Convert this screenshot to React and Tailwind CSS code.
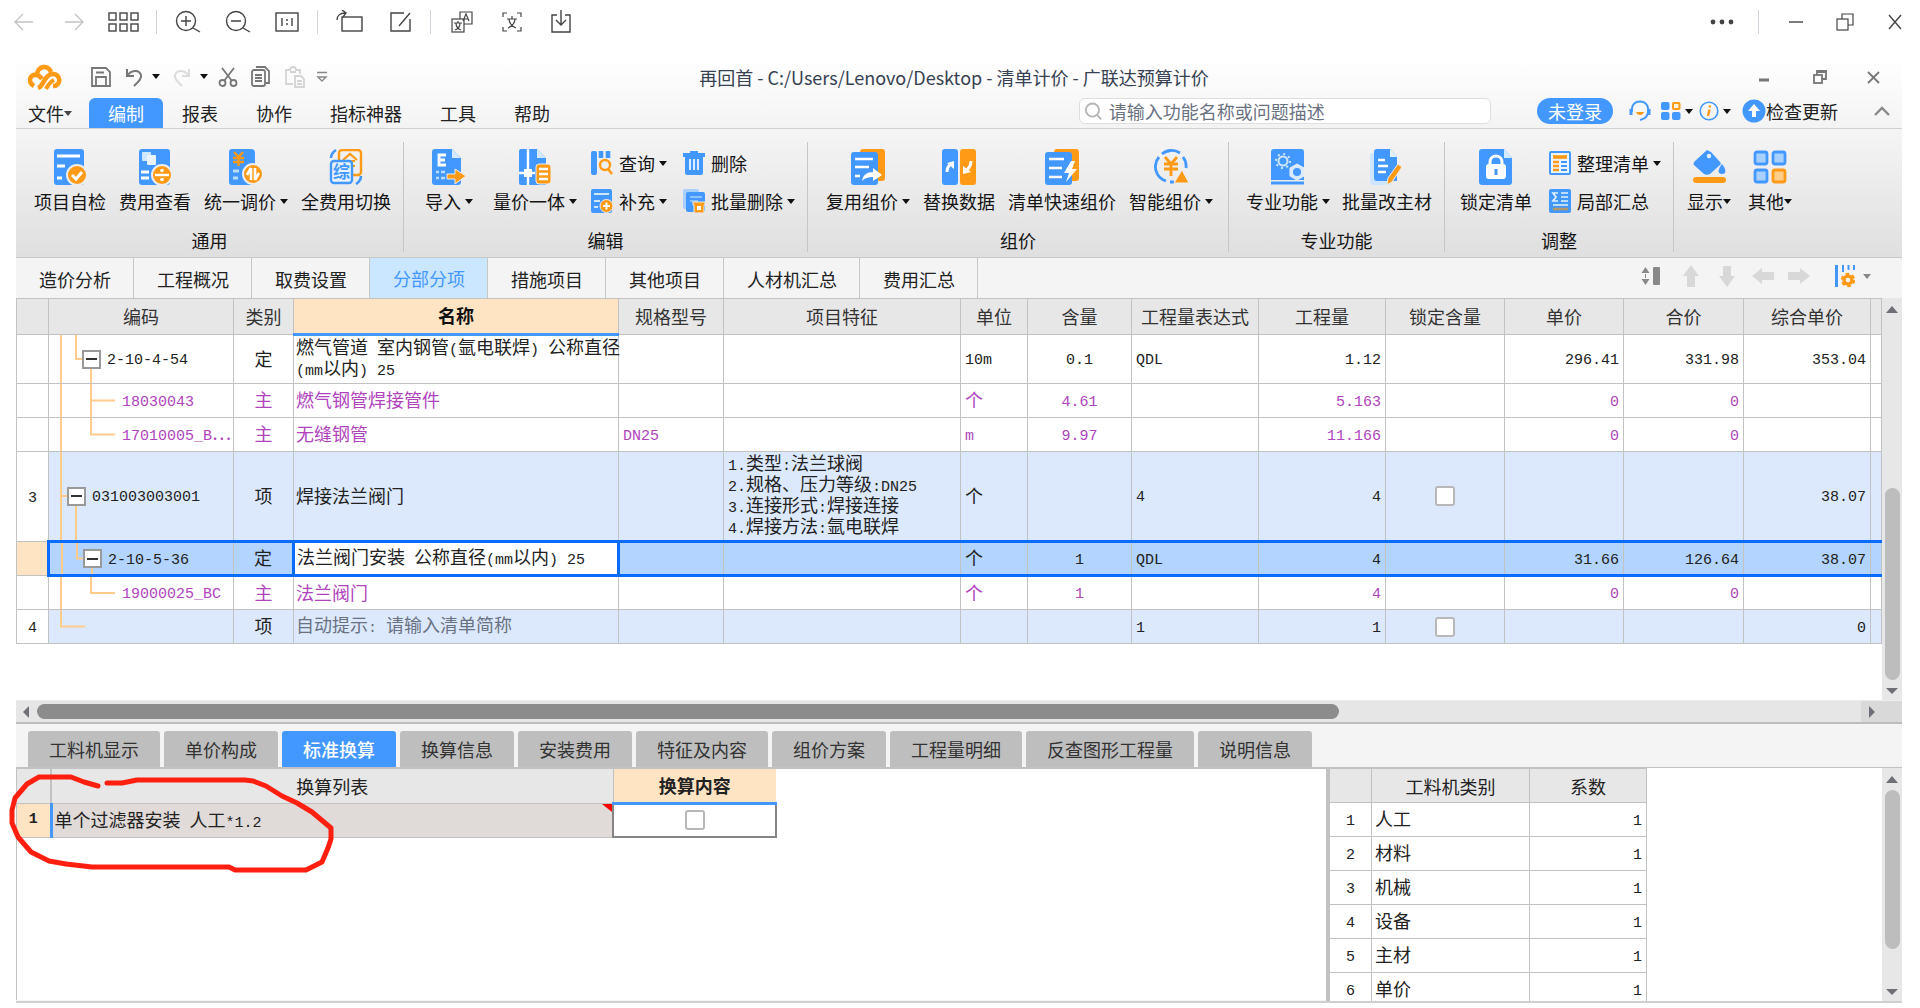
import React, { useState } from 'react';

const BLUE = '#4398ff';
const ORANGE = '#ff9a16';

const Caret = ({ color = '#111' }) => (
  <svg width="8" height="5" viewBox="0 0 8 5" className="shrink-0">
    <path d="M0 0h8L4 5z" fill={color} />
  </svg>
);

/* ---------- viewer toolbar icons ---------- */

const Line = ({ w = 24, h = 24, children, color = '#444', sw = 1.4 }) => (
  <svg width={w} height={h} viewBox={`0 0 ${w} ${h}`} fill="none" stroke={color} strokeWidth={sw}>
    {children}
  </svg>
);

const BackIcon = () => <Line w={20} color="#c4c4c4"><path d="M19 12H1M9 4l-8 8 8 8" /></Line>;
const ForwardIcon = () => <Line w={20} color="#c4c4c4"><path d="M1 12h18M11 4l8 8-8 8" /></Line>;
const ThumbsIcon = () => (
  <Line w={32}>
    {[1, 12, 23].map(x => (
      <g key={x}>
        <rect x={x} y="3" width="7" height="7" />
        <rect x={x} y="14" width="7" height="7" />
      </g>
    ))}
  </Line>
);
const ZoomInIcon = () => (
  <Line w={26}><circle cx="11" cy="11" r="9.5" /><path d="M18 18l7 4M6 11h10M11 6v10" /></Line>
);
const ZoomOutIcon = () => (
  <Line w={26}><circle cx="11" cy="11" r="9.5" /><path d="M18 18l7 4M6 11h10" /></Line>
);
const ActualSizeIcon = () => (
  <Line><rect x="1" y="3" width="22" height="18" /><path d="M7 8v8M17 8v8M12 9v2M12 13v2" /></Line>
);
const RotateIcon = () => (
  <Line w={28}><rect x="6" y="7" width="20" height="14" /><path d="M1 10C1 6 4 3 9 3M6 0l4 3-3 4" /></Line>
);
const EditIcon = () => <Line w={22}><path d="M14 3H1v18h19V9M20 3L9 16" /></Line>;
const TranslateIcon = () => (
  <Line w={22} sw={1.2}>
    <path d="M9 9V2h12v12h-8" />
    <rect x="1" y="9" width="12" height="13" />
    <path d="M12 11l3-7 3 7M13 9h4M3 13h8M7 11v2M4 20c3-1 5-4 5-7M5 13c0 3 2 6 5 7" />
  </Line>
);
const ExtractIcon = () => (
  <Line w={20} sw={1.2}>
    <path d="M1 7V3h4M15 3h4v4M1 17v4h4M15 21h4v-4M5 9h10M10 6v3M6 18c4-2 7-5 7-9M7 9c0 4 3 7 7 9" />
  </Line>
);
const DownloadIcon = () => <Line w={20}><path d="M6 5H1v17h18V5h-5M10 0v15M5 10l5 5 5-5" /></Line>;

const Sep = () => <span className="w-px h-6 bg-gray-300" />;

const ViewerBar = () => (
  <header className="flex items-center h-11 pl-3.5 pr-[18px] shrink-0">
    <div className="flex items-center gap-[26px]">
      <button className="mr-1" aria-label="上一张"><BackIcon /></button>
      <button aria-label="下一张"><ForwardIcon /></button>
      <button className="-ml-0.5 -mr-2.5" aria-label="缩略图"><ThumbsIcon /></button>
      <Sep />
      <div className="flex items-center gap-6 -mx-2">
        <button aria-label="放大"><ZoomInIcon /></button>
        <button aria-label="缩小"><ZoomOutIcon /></button>
        <button aria-label="实际大小"><ActualSizeIcon /></button>
      </div>
      <Sep />
      <div className="flex items-center gap-[26px] -mx-2">
        <button aria-label="旋转"><RotateIcon /></button>
        <button aria-label="编辑"><EditIcon /></button>
      </div>
      <Sep />
      <div className="flex items-center gap-[29px] -ml-1.5">
        <button aria-label="翻译"><TranslateIcon /></button>
        <button aria-label="提取文字"><ExtractIcon /></button>
        <button aria-label="下载"><DownloadIcon /></button>
      </div>
    </div>
    <div className="flex items-center ml-auto">
      <button aria-label="更多">
        <svg width="24" height="6" viewBox="0 0 24 6" fill="#444">
          <circle cx="3" cy="3" r="2.4" /><circle cx="12" cy="3" r="2.4" /><circle cx="21" cy="3" r="2.4" />
        </svg>
      </button>
      <span className="w-px h-6 bg-gray-300 ml-6 mr-[30px]" />
      <button className="mr-[33px]" aria-label="最小化"><Line w={14} h={18}><path d="M0 9h14" /></Line></button>
      <button className="mr-[34px]" aria-label="还原">
        <Line w={18} h={18} sw={1.2}><rect x="1" y="6" width="11" height="11" /><path d="M6 6V1h11v11h-5" /></Line>
      </button>
      <button aria-label="关闭"><Line w={14} h={18}><path d="M1 2l12 14M13 2L1 16" /></Line></button>
    </div>
  </header>
);

/* ---------- application title bar ---------- */

const Logo = () => (
  <svg width="34" height="26" viewBox="0 0 34 26" fill="none" stroke={ORANGE} strokeWidth="4.6">
    <path d="M6 22C-1 18 2 10 8 11c3 0 4 1 6 4" />
    <path d="M9 11C9 2 20 0 23 8" />
    <path d="M10 24C16 22 16 11 24 10c9-1 10 12 1 12" />
    <path d="M18 25c2-4 4-7 8-9" strokeWidth="4" />
  </svg>
);

const TitleBar = () => (
  <div className="flex items-center h-[37px] pl-3 pr-[22px]">
    <div className="flex flex-1 items-center">
      <Logo />
      <button className="ml-7 mr-3" aria-label="保存">
        <Line w={22} h={22} color="#777" sw={1.8}><path d="M2 2h14l4 4v14H2zM6 20v-9h10v9M6 6.500h8" /></Line>
      </button>
      <button className="flex items-center gap-2 mr-3" aria-label="撤销">
        <Line w={20} h={22} color="#777" sw={2}><path d="M3 3v7h7M3 10c4-6 12-7 14-1 1 4-3 7-7 11" /></Line>
        <Caret />
      </button>
      <button className="flex items-center gap-2 mr-2.5" aria-label="恢复">
        <Line w={20} h={22} color="#dcdcdc" sw={2}><path d="M17 3v7h-7M17 10C13 4 5 3 3 9c-1 4 3 7 7 11" /></Line>
        <Caret />
      </button>
      <button className="mr-3" aria-label="剪切">
        <Line w={20} h={22} color="#777" sw={1.8}>
          <path d="M4 2l10 13M16 2L6 15" /><circle cx="4.500" cy="17" r="3" /><circle cx="15.500" cy="17" r="3" />
        </Line>
      </button>
      <button className="mr-3.5" aria-label="复制">
        <Line w={20} h={22} color="#777" sw={1.8}>
          <rect x="2" y="4" width="13" height="16" rx="2" /><path d="M6 1h9l4 4v12h-3M5 9h7M5 12h7M5 15h7" />
        </Line>
      </button>
      <button className="mr-2.5" aria-label="粘贴">
        <Line w={22} h={22} color="#d4d4d4" sw={1.8}>
          <path d="M9 18H2V4h4c0-4 6-4 6 0h4v4M6 6h6" /><path d="M11 10h6l3 3v8h-9zM13 15h5M13 18h5" />
        </Line>
      </button>
      <button aria-label="自定义快速访问">
        <Line w={12} h={12} color="#888"><path d="M1 1.500h10M2 6l4 4 4-4z" /></Line>
      </button>
    </div>
    <h1 className="text-lg leading-6 text-gray-700">再回首 - C:/Users/Lenovo/Desktop - 清单计价 - 广联达预算计价</h1>
    <div className="flex flex-1 items-center justify-end gap-11">
      <button aria-label="最小化窗口"><Line w={10} h={14} color="#777" sw={3}><path d="M0 10h10" /></Line></button>
      <button aria-label="还原窗口">
        <Line w={14} h={14} color="#777" sw={1.8}><rect x="1" y="5" width="8" height="8" /><path d="M4 5V1h9v8H9M4 2h9" /></Line>
      </button>
      <button className="-ml-1" aria-label="关闭窗口"><Line w={13} h={14} color="#777" sw={1.8}><path d="M1 2l11 11M12 2L1 13" /></Line></button>
    </div>
  </div>
);

const MENUS = ['编制', '报表', '协作', '指标神器', '工具', '帮助'];

const MenuRow = () => {
  const [menu, setMenu] = useState('编制');

  return (
    <nav className="flex items-end h-[34px] text-lg leading-[30px] border-b border-[#d0d0d0] pl-3 pr-3">
      <button className="flex items-center mr-[17px]">文件<Caret color="#444" /></button>
      {MENUS.map(item => (
        <button
          key={item}
          onClick={() => setMenu(item)}
          className={item === menu ? 'px-[19px] bg-[#4398ff] text-white rounded-t-md' : 'px-[19px]'}
        >
          {item}
        </button>
      ))}
      <div className="flex items-center ml-auto mb-1">
        <label className="flex items-center w-[412px] h-[26px] mr-[46px] px-1 gap-1.5 bg-white border border-[#dedede] rounded-md">
          <Line w={20} h={20} color="#b5b5b5" sw={2}><circle cx="9" cy="9" r="7" /><path d="M14 14l4 5" /></Line>
          <input className="w-full outline-none text-lg placeholder:text-gray-500" placeholder="请输入功能名称或问题描述" />
        </label>
        <button className="h-[26px] px-[11px] leading-[26px] mr-4 rounded-full bg-[#4398ff] text-white">未登录</button>
        <button className="mr-2.5" aria-label="客服">
          <svg width="22" height="22" viewBox="0 0 22 22" fill="none" stroke={BLUE} strokeWidth="2">
            <path d="M3 12C2 5 6 1.500 11 1.500S20 5 19 12c0 5-4 7-8 8" />
            <path d="M2 9v6M20 9v6" strokeWidth="3" />
            <path d="M7 12c1 4 7 4 8 0z" fill={ORANGE} stroke="none" />
          </svg>
        </button>
        <button className="flex items-center gap-1 mr-1.5" aria-label="应用">
          <svg width="20" height="20" viewBox="0 0 20 20" fill={BLUE}>
            <rect x="0" y="1" width="8.500" height="8" rx="2" />
            <rect x="0" y="11" width="8.500" height="8" rx="2" />
            <rect x="11" y="11" width="8.500" height="8" rx="2" />
            <rect x="12" y="2" width="6.500" height="6" rx="1" fill="#fff3df" stroke={ORANGE} strokeWidth="2" />
          </svg>
          <Caret />
        </button>
        <button className="flex items-center gap-1 mr-[11px]" aria-label="关于">
          <svg width="20" height="20" viewBox="0 0 20 20" fill="none">
            <circle cx="10" cy="10" r="8.800" stroke={BLUE} strokeWidth="1.600" />
            <path d="M10.500 8.500l-1.500 6.500M11 4.500l-.3 2" stroke={ORANGE} strokeWidth="2.400" />
          </svg>
          <Caret />
        </button>
        <button className="flex items-center mr-9">
          <svg width="24" height="24" viewBox="0 0 24 24">
            <circle cx="12" cy="12" r="11.500" fill={BLUE} />
            <path d="M12 5l6 7h-4v6h-4v-6H6z" fill="#fff" />
          </svg>
          <span className="leading-[26px]">检查更新</span>
        </button>
        <button aria-label="收起功能区"><Line w={16} h={12} color="#888" sw={2.4}><path d="M1 10l7-7 7 7" /></Line></button>
      </div>
    </nav>
  );
};

/* ---------- ribbon icons ---------- */

const Big = ({ children }) => (
  <svg width="34" height="36" viewBox="0 0 34 36" fill="none">{children}</svg>
);
const Small = ({ children }) => (
  <svg width="22" height="24" viewBox="0 0 22 24" fill="none" className="shrink-0">{children}</svg>
);

const CheckDocIcon = () => (
  <Big>
    <rect x="1" y="0" width="30" height="36" rx="3" fill={BLUE} />
    <path d="M4 7h23M4 17h8M4 29h5" stroke="#fff" strokeWidth="3" />
    <circle cx="24" cy="26" r="10" fill={ORANGE} stroke="#eee" strokeWidth="2" />
    <path d="M19 26l4 4 6-7" stroke="#fff" strokeWidth="3" />
  </Big>
);
const FeeViewIcon = () => (
  <Big>
    <rect x="1" y="0" width="31" height="36" rx="3" fill={BLUE} />
    <rect x="4" y="3" width="9" height="9" rx="1" fill="#cfe6ff" />
    <rect x="9" y="6" width="9" height="10" rx="1" fill="#eaf4ff" />
    <path d="M3 23h8M3 29h8" stroke="#fff" strokeWidth="3" />
    <circle cx="24" cy="26" r="10" fill={ORANGE} stroke="#eee" strokeWidth="2" />
    <path d="M17 26h14" stroke="#fff" strokeWidth="2.400" />
    <circle cx="24" cy="21.500" r="1.800" fill="#fff" /><circle cx="24" cy="30.500" r="1.800" fill="#fff" />
  </Big>
);
const AdjustIcon = () => (
  <Big>
    <path d="M3 0h19a4 4 0 0 1 4 4v28a4 4 0 0 1-4 4H3a3 3 0 0 1-3-3V3a3 3 0 0 1 3-3z" fill={BLUE} />
    <path d="M5 3l4.500 5L14 3M4 9h11M4 13h11M9.500 8v9" stroke={ORANGE} strokeWidth="2.400" />
    <path d="M4 22h6M4 29h5" stroke="#bcdcff" strokeWidth="3" />
    <circle cx="24" cy="25" r="10" fill={ORANGE} stroke="#eee" strokeWidth="2" />
    <path d="M22 19v12M22 19l-4 7M26 19v12M26 31l4-7" stroke="#fff" strokeWidth="2.600" />
  </Big>
);
const SwitchFeeIcon = () => (
  <Big>
    <rect x="10" y="1" width="22" height="25" rx="3" stroke={ORANGE} strokeWidth="2.400" />
    <path d="M14 11l7-6 7 6M16 12h10M16 17h10M21 12v9" stroke={ORANGE} strokeWidth="2.200" />
    <rect x="2" y="12" width="21" height="22" rx="3" fill="#e8f3ff" stroke={BLUE} strokeWidth="2.400" />
    <text x="4" y="29" fontSize="17" fontWeight="bold" fill={BLUE} fontFamily="Noto Sans CJK SC, sans-serif">综</text>
    <path d="M2 9c0-4 2-6 5-8M32 27c0 4-2 6-5 8" stroke={BLUE} strokeWidth="2.600" />
  </Big>
);
const ImportIcon = () => (
  <Big>
    <path d="M3 0h17l9 9v24a3 3 0 0 1-3 3H3a3 3 0 0 1-3-3V3a3 3 0 0 1 3-3z" fill={BLUE} />
    <path d="M20 0l9 9h-9z" fill="#d5e9ff" />
    <path d="M14 6H7v10h7M7 11h6" stroke="#fff" strokeWidth="2.800" />
    <path d="M4 23h3M9 23h4M4 29h3M9 29h4" stroke="#bcdcff" strokeWidth="2.600" />
    <path d="M15 25h8v-5l11 7-11 8v-5h-8z" fill={ORANGE} stroke="#eee" />
  </Big>
);
const QuantityIcon = () => (
  <Big>
    <path d="M3 0h16l9 9v27H3a2 2 0 0 1-2-2V2a2 2 0 0 1 2-2z" fill={BLUE} />
    <path d="M19 0l9 9h-9z" fill="#d5e9ff" />
    <path d="M10 0v36M0 24h17" stroke="#fff" strokeWidth="2.400" />
    <rect x="6" y="20" width="8" height="8" fill="#fff" />
    <rect x="18" y="15" width="15" height="20" rx="3" fill={ORANGE} stroke="#eee" />
    <path d="M21 20h9M21 25h9M21 30h9" stroke="#fff" strokeWidth="2.400" />
  </Big>
);
const ReuseIcon = () => (
  <Big>
    <rect x="9" y="0" width="25" height="32" rx="3" fill={ORANGE} />
    <rect x="0" y="3" width="27" height="33" rx="3" fill={BLUE} />
    <path d="M4 10h18M4 18h14M4 27h5" stroke="#fff" strokeWidth="2.600" />
    <path d="M11 32c1-6 5-9 11-9v-4l9 7-9 6v-4c-5 0-8 1-11 4z" fill="#fff" />
  </Big>
);
const ReplaceIcon = () => (
  <Big>
    <rect x="0" y="0" width="16" height="36" rx="3" fill={BLUE} />
    <rect x="18" y="0" width="16" height="36" rx="3" fill={ORANGE} />
    <path d="M5 23c0-4 1-6 4-8" stroke="#fff" strokeWidth="3" />
    <path d="M5 14l7-2v8z" fill="#fff" />
    <path d="M29 12c0 4-1 6-4 9" stroke="#fff" strokeWidth="3" />
    <path d="M21 17v8l8-2z" fill="#fff" />
  </Big>
);
const QuickIcon = () => (
  <Big>
    <rect x="9" y="0" width="25" height="32" rx="3" fill={ORANGE} />
    <rect x="0" y="3" width="27" height="33" rx="3" fill={BLUE} />
    <path d="M4 10h15M4 19h13M4 28h13" stroke="#fff" strokeWidth="2.600" />
    <path d="M26 12L19 24h5l-3 9 11-13h-5l3-8z" fill="#fff" />
  </Big>
);
const SmartIcon = () => (
  <Big>
    <path d="M12 32A15 15 0 0 1 5 8" stroke={BLUE} strokeWidth="2.800" />
    <path d="M8 5A15 15 0 0 1 26 4M29 8a15 15 0 0 1 3 11M16 33h4" stroke={BLUE} strokeWidth="2.800" />
    <path d="M11 8l6 7 6-7M10 15h14M10 20h14M17 15v12" stroke={ORANGE} strokeWidth="2.800" />
    <path d="M28 21l7 13H20z" fill={ORANGE} stroke="#eee" />
  </Big>
);
const ProIcon = () => (
  <Big>
    <path d="M3 0h27a3 3 0 0 1 3 3v28H0V3a3 3 0 0 1 3-3z" fill={BLUE} />
    <path d="M0 34h33" stroke={BLUE} strokeWidth="3" />
    <circle cx="12" cy="12" r="4.500" stroke="#cfe6ff" strokeWidth="2" />
    <circle cx="12" cy="12" r="7" stroke="#cfe6ff" strokeWidth="2" strokeDasharray="2 3.500" />
    <path d="M26 15l7 4v8l-7 4-7-4v-8z" fill="#d8eaff" stroke="#eee" /><circle cx="26" cy="23" r="4" fill={BLUE} />
  </Big>
);
const BatchEditIcon = () => (
  <Big>
    <path d="M3 4h18v32H3a3 3 0 0 1-3-3V7a3 3 0 0 1 3-3z" fill="#cde5ff" />
    <path d="M7 0h13l7 8v24H7a3 3 0 0 1-3-3V3a3 3 0 0 1 3-3z" fill={BLUE} />
    <path d="M20 0l7 8h-7z" fill="#e5f2ff" />
    <path d="M8 11h7M8 17h10M8 23h8" stroke="#fff" strokeWidth="2.400" />
    <path d="M28 15l4 3-10 15-5 3 1-7z" fill={ORANGE} stroke="#eee" />
  </Big>
);
const LockIcon = () => (
  <Big>
    <path d="M3 0h22l8 9v24a3 3 0 0 1-3 3H3a3 3 0 0 1-3-3V3a3 3 0 0 1 3-3z" fill={BLUE} />
    <path d="M25 0l8 9h-8z" fill="#d5e9ff" />
    <rect x="7" y="15" width="20" height="15" rx="3" fill="#fff" />
    <path d="M11 16v-3c0-8 12-8 12 0v3" stroke="#fff" strokeWidth="3" />
    <path d="M17 20v6" stroke={BLUE} strokeWidth="3" />
  </Big>
);
const FillIcon = () => (
  <Big>
    <path d="M15 1l4 2 9 10c1 1 1 2 0 3L18 25c-2 1-4 1-6 0L3 17c-2-1-2-3 0-5z" fill={BLUE} />
    <circle cx="17" cy="7" r="2.200" fill="#e5f2ff" />
    <path d="M30 15c4 5 5 10 0 10s-4-5 0-10z" fill={BLUE} />
    <rect x="1" y="28" width="33" height="6" rx="3" fill={ORANGE} />
  </Big>
);
const OtherIcon = () => (
  <Big>
    <rect x="2" y="3" width="12" height="12" rx="2" fill="#a8d0ff" stroke={BLUE} strokeWidth="2.800" />
    <rect x="20" y="3" width="12" height="12" rx="2" fill="#a8d0ff" stroke={BLUE} strokeWidth="2.800" />
    <rect x="2" y="21" width="12" height="12" rx="2" fill="#a8d0ff" stroke={BLUE} strokeWidth="2.800" />
    <rect x="20" y="21" width="12" height="12" rx="2" fill="#ffcf8a" stroke={ORANGE} strokeWidth="2.800" />
  </Big>
);
const QueryIcon = () => (
  <Small>
    <rect x="0" y="0" width="6" height="24" rx="2" fill={BLUE} />
    <path d="M10 0v7M17 0v7" stroke={BLUE} strokeWidth="4.600" />
    <circle cx="14" cy="14" r="5" stroke={ORANGE} strokeWidth="2.400" /><path d="M17 18l4 5" stroke={ORANGE} strokeWidth="2.600" />
  </Small>
);
const AddIcon = () => (
  <Small>
    <rect x="0" y="0" width="21" height="24" rx="2" fill={BLUE} />
    <path d="M3 5h15M3 12h6M3 18h4" stroke="#cfe6ff" strokeWidth="2" />
    <circle cx="15.500" cy="17" r="6.500" fill={ORANGE} stroke="#eee" /><path d="M12 17h7M15.500 13.500v7" stroke="#fff" strokeWidth="2" />
  </Small>
);
const TrashIcon = () => (
  <Small>
    <path d="M0 2h7V0h8v2h7v4H0z" fill={BLUE} />
    <path d="M2 6h18v16a2 2 0 0 1-2 2H4a2 2 0 0 1-2-2z" fill={BLUE} />
    <path d="M7 8v11M11 8v11M15 8v11" stroke="#fff" strokeWidth="1.600" />
  </Small>
);
const BatchTrashIcon = () => (
  <Small>
    <rect x="0" y="0" width="16" height="20" rx="2" fill="#a8d0ff" />
    <rect x="3" y="3" width="19" height="20" rx="2" fill={BLUE} />
    <path d="M7 8h12M7 12h8" stroke="#a8d0ff" strokeWidth="1.600" />
    <path d="M10 13h12v3h-1v8H11v-8h-1z" fill={ORANGE} stroke="#eee" /><rect x="14" y="17" width="4" height="4" fill="#fff" />
  </Small>
);
const TidyIcon = () => (
  <Small>
    <rect x="1" y="1" width="20" height="22" rx="1" fill="#eaf4ff" stroke={BLUE} strokeWidth="2" />
    <path d="M4 6h14" stroke={ORANGE} strokeWidth="3.600" />
    <path d="M4 11h6M4 15h6M4 19h6" stroke={ORANGE} strokeWidth="2.600" />
    <path d="M12 11h6M12 15h6M12 19h6" stroke={BLUE} strokeWidth="1.800" />
  </Small>
);
const PartSumIcon = () => (
  <Small>
    <rect x="0" y="0" width="22" height="24" rx="2" fill={BLUE} />
    <path d="M9 4H4l3 4-3 4h5M12 4h7M12 8h7M12 12h7M4 16h15" stroke="#e5f2ff" strokeWidth="1.700" />
    <path d="M4 20h15" stroke="#b0986a" strokeWidth="2.600" />
  </Small>
);

const BigButton = ({ icon: Icon, label, menu, tight }) => (
  <button className="flex flex-col items-center px-1.5">
    <Icon />
    <span className={`flex items-center mt-[3px] leading-[26px] ${tight ? '' : 'gap-1'}`}>
      {label}{menu && <Caret />}
    </span>
  </button>
);

const SmallButton = ({ icon: Icon, label, menu }) => (
  <button className="flex items-center h-7 gap-1.5">
    <Icon />
    <span className="flex items-center gap-1">{label}{menu && <Caret />}</span>
  </button>
);

const Group = ({ title, className = '', children }) => (
  <section className="flex flex-col h-[110px] border-r border-[#c6c6c6]">
    <div className={`flex pt-[7px] ${className}`}>{children}</div>
    <h2 className="mt-auto text-center leading-6">{title}</h2>
  </section>
);

const Ribbon = () => (
  <div className="flex items-start h-[129px] pt-[13px] text-lg text-[#151515] bg-gradient-to-b from-[#f5f5f5] to-[#dfdfdf] border-b border-[#c8c8c8]">
    <Group title="通用" className="pl-3 pr-1.5 gap-px">
      <BigButton icon={CheckDocIcon} label="项目自检" />
      <BigButton icon={FeeViewIcon} label="费用查看" />
      <BigButton icon={AdjustIcon} label="统一调价" menu />
      <BigButton icon={SwitchFeeIcon} label="全费用切换" />
    </Group>
    <Group title="编辑" className="pl-[15px] pr-3 gap-2">
      <BigButton icon={ImportIcon} label="导入" menu />
      <BigButton icon={QuantityIcon} label="量价一体" menu />
      <div className="flex gap-4">
        <div className="flex flex-col gap-2.5">
          <SmallButton icon={QueryIcon} label="查询" menu />
          <SmallButton icon={AddIcon} label="补充" menu />
        </div>
        <div className="flex flex-col gap-2.5">
          <SmallButton icon={TrashIcon} label="删除" />
          <SmallButton icon={BatchTrashIcon} label="批量删除" menu />
        </div>
      </div>
    </Group>
    <Group title="组价" className="pl-3 pr-[9px] gap-px">
      <BigButton icon={ReuseIcon} label="复用组价" menu />
      <BigButton icon={ReplaceIcon} label="替换数据" />
      <BigButton icon={QuickIcon} label="清单快速组价" />
      <BigButton icon={SmartIcon} label="智能组价" menu />
    </Group>
    <Group title="专业功能" className="pl-[11px] pr-1.5">
      <BigButton icon={ProIcon} label="专业功能" menu />
      <BigButton icon={BatchEditIcon} label="批量改主材" />
    </Group>
    <Group title="调整" className="pl-[9px] pr-3 gap-[11px]">
      <BigButton icon={LockIcon} label="锁定清单" />
      <div className="flex flex-col gap-2.5">
        <SmallButton icon={TidyIcon} label="整理清单" menu />
        <SmallButton icon={PartSumIcon} label="局部汇总" />
      </div>
    </Group>
    <div className="flex pt-[7px] pl-[7px] gap-[5px]">
      <BigButton icon={FillIcon} label="显示" menu tight />
      <BigButton icon={OtherIcon} label="其他" menu tight />
    </div>
  </div>
);

/* ---------- project tabs ---------- */

const TABS = ['造价分析', '工程概况', '取费设置', '分部分项', '措施项目', '其他项目', '人材机汇总', '费用汇总'];

const Arrow = ({ d }) => (
  <svg width="24" height="24" viewBox="0 0 24 24" fill="#d8d8d8"><path d={d} /></svg>
);

const ProjectTabs = () => {
  const [tab, setTab] = useState('分部分项');

  return (
    <div className="flex h-10 text-lg bg-[#f4f4f4]">
      {TABS.map(name => (
        <button
          key={name}
          onClick={() => setTab(name)}
          className={`pl-[23px] pr-[22px] border-r border-[#c8c8c8] ${name === tab ? 'bg-[#cbe6ff] text-[#4398ff]' : 'pt-0.5 text-[#222]'}`}
        >
          {name}
        </button>
      ))}
      <div className="flex items-center ml-auto pr-[31px] pb-1 gap-3">
        <button aria-label="行高">
          <svg width="20" height="20" viewBox="0 0 20 20" fill="#888">
            <path d="M4.500 1l4 6h-8zM4.500 19l4-6h-8z" /><path d="M4 8h1v4H4z" /><rect x="12" y="1" width="7" height="18" rx="1" />
          </svg>
        </button>
        <button className="ml-1.5" aria-label="上移"><Arrow d="M12 1l8 11h-4v11H8V12H4z" /></button>
        <button aria-label="下移"><Arrow d="M12 23l8-11h-4V2H8v10H4z" /></button>
        <button aria-label="左移"><Arrow d="M1 12l10-8v4h12v8H11v4z" /></button>
        <button aria-label="右移"><Arrow d="M23 12L13 4v4H1v8h12v4z" /></button>
        <button className="flex items-center gap-2 ml-3" aria-label="列设置">
          <svg width="20" height="24" viewBox="0 0 20 24" fill="none">
            <path d="M1.500 1v22" stroke={BLUE} strokeWidth="3" />
            <path d="M8 1v7M13.500 1v5M19 1v5" stroke={BLUE} strokeWidth="2" />
            <circle cx="13" cy="16" r="4" stroke={ORANGE} strokeWidth="3.400" />
            <circle cx="13" cy="16" r="6" stroke={ORANGE} strokeWidth="2.400" strokeDasharray="3.500 2.800" />
          </svg>
          <Caret color="#888" />
        </button>
      </div>
    </div>
  );
};

/* ---------- bill of quantities ---------- */

// Latin runs are set in a narrower mono face so two of them fill one Chinese character
const Mixed = ({ children }) =>
  String(children).split(/([\x20-\x7e]+)/).map((part, i) =>
    i % 2 ? <span key={i} className="font-['Liberation_Mono',monospace] text-[15px] leading-none whitespace-pre">{part}</span> : part
  );

const COLUMNS = ['', '编码', '类别', '名称', '规格型号', '项目特征', '单位', '含量', '工程量表达式', '工程量', '锁定含量', '单价', '合价', '综合单价', ''];

const ROWS = [
  { h: 'h-[49px]', level: 1, open: true, code: '2-10-4-54', kind: '定', name: '燃气管道 室内钢管(氩电联焊) 公称直径\n(mm以内) 25', unit: '10m', content: '0.1', expr: 'QDL', qty: '1.12', price: '296.41', total: '331.98', full: '353.04' },
  { h: 'h-[34px]', level: 2, mid: true, code: '18030043', kind: '主', name: '燃气钢管焊接管件', unit: '个', content: '4.61', qty: '5.163', price: '0', total: '0', tone: 'text-[#b044bd]' },
  { h: 'h-[34px]', level: 2, code: '17010005_B…', kind: '主', name: '无缝钢管', spec: 'DN25', unit: 'm', content: '9.97', qty: '11.166', price: '0', total: '0', tone: 'text-[#b044bd]' },
  { h: 'h-[90px]', no: '3', level: 0, open: true, code: '031003003001', kind: '项', name: '焊接法兰阀门', feature: '1.类型:法兰球阀\n2.规格、压力等级:DN25\n3.连接形式:焊接连接\n4.焊接方法:氩电联焊', unit: '个', expr: '4', qty: '4', lock: true, full: '38.07', bg: 'bg-[#dce9fd]' },
  { h: 'h-[34px]', level: 1, open: true, code: '2-10-5-36', kind: '定', name: '法兰阀门安装 公称直径(mm以内) 25', unit: '个', content: '1', expr: 'QDL', qty: '4', price: '31.66', total: '126.64', full: '38.07', selected: true, bg: 'bg-[#b2d4fe]' },
  { h: 'h-[34px]', level: 2, code: '19000025_BC', kind: '主', name: '法兰阀门', unit: '个', content: '1', qty: '4', price: '0', total: '0', tone: 'text-[#b044bd]' },
  { h: 'h-[34px]', no: '4', level: -1, code: '', kind: '项', name: '自动提示: 请输入清单简称', hint: true, expr: '1', qty: '1', lock: true, full: '0', bg: 'bg-[#dce9fd]' },
];

const Tree = ({ row }) => (
  <svg className="absolute inset-0 w-full h-full" stroke="#ffcb8a" strokeWidth="2" fill="none">
    <line x1="12" x2="12" y1="0" y2={row.level === -1 ? '50%' : '100%'} />
    {row.level === -1 && <line x1="11" x2="36" y1="50%" y2="50%" />}
    {row.level === 0 && (
      <>
        <line x1="12" x2="18" y1="50%" y2="50%" />
        <line x1="27" x2="27" y1="50%" y2="100%" />
      </>
    )}
    {row.level === 1 && (
      <>
        <line x1="27" x2="27" y1="0" y2="50%" />
        <line x1="26" x2="33" y1="50%" y2="50%" />
        <line x1="42" x2="42" y1="50%" y2="100%" />
      </>
    )}
    {row.level === 2 && (
      <>
        <line x1="42" x2="42" y1="0" y2={row.mid ? '100%' : '50%'} />
        <line x1="41" x2="66" y1="50%" y2="50%" />
      </>
    )}
  </svg>
);

const CODE_PAD = { '-1': 'pl-[18px]', 0: 'pl-[18px]', 1: 'pl-[33px]', 2: 'pl-[73px]' };

const Check = ({ label }) => (
  <input type="checkbox" aria-label={label} className="block mx-auto appearance-none w-5 h-5 bg-white border-2 border-[#b8b8b8] rounded-[3px]" />
);

const BillRow = ({ row }) => {
  const edge = row.selected ? 'border-y-[3px] border-y-[#0a6cff]' : '';
  const td = `border border-[#c2c2c2] px-1 pb-[3px] ${edge}`;

  return (
    <tr className={`${row.h} ${row.bg || 'bg-white'} ${row.tone || 'text-[#222]'}`}>
      <th scope="row" className={`border border-[#c2c2c2] pb-[3px] font-normal text-[#222] ${row.selected ? 'bg-[#ffe4c4]' : 'bg-white'}`}><Mixed>{row.no || ''}</Mixed></th>
      <td className={`relative border border-[#c2c2c2] whitespace-nowrap ${edge} ${row.selected ? 'border-l-[3px] border-l-[#0a6cff]' : ''}`}>
        <Tree row={row} />
        <div className={`relative flex items-center gap-1.5 ${CODE_PAD[row.level]}`}>
          {row.open && (
            <button className="flex items-center justify-center w-[19px] h-[19px] bg-white border-2 border-[#999]" aria-label="折叠">
              <span className="w-[11px] h-0.5 bg-[#333]" />
            </button>
          )}
          <span className="pb-[3px]"><Mixed>{row.code}</Mixed></span>
        </div>
      </td>
      <td className={`${td} text-center`}>{row.kind}</td>
      <td className={`${td} pl-0.5 pr-0 whitespace-pre ${row.selected ? 'bg-white border-x-[3px] border-x-[#0a6cff]' : ''} ${row.hint ? 'text-gray-500' : ''}`}><Mixed>{row.name}</Mixed></td>
      <td className={td}><Mixed>{row.spec || ''}</Mixed></td>
      <td className={`${td} whitespace-pre`}><Mixed>{row.feature || ''}</Mixed></td>
      <td className={td}><Mixed>{row.unit || ''}</Mixed></td>
      <td className={`${td} text-center`}><Mixed>{row.content || ''}</Mixed></td>
      <td className={td}><Mixed>{row.expr || ''}</Mixed></td>
      <td className={`${td} text-right`}><Mixed>{row.qty}</Mixed></td>
      <td className={`border border-[#c2c2c2] ${edge}`}>{row.lock && <Check label="锁定含量" />}</td>
      <td className={`${td} text-right`}><Mixed>{row.price || ''}</Mixed></td>
      <td className={`${td} text-right`}><Mixed>{row.total || ''}</Mixed></td>
      <td className={`${td} text-right`}><Mixed>{row.full || ''}</Mixed></td>
      <td className={td} />
    </tr>
  );
};

const BillTable = () => (
  <table className="w-full table-fixed border-collapse text-lg leading-[18px]">
    <colgroup>
      <col className="w-8" />
      <col className="w-[185px]" />
      <col className="w-[60px]" />
      <col className="w-[325px]" />
      <col className="w-[105px]" />
      <col className="w-[237px]" />
      <col className="w-[67px]" />
      <col className="w-[104px]" />
      <col className="w-[127px]" />
      <col className="w-[127px]" />
      <col className="w-[119px]" />
      <col className="w-[119px]" />
      <col className="w-[120px]" />
      <col className="w-[127px]" />
      <col />
    </colgroup>
    <thead>
      <tr className="h-9 bg-[#e7e7e7] text-[#333]">
        {COLUMNS.map((name, i) => (
          <th
            key={i}
            className={name === '名称'
              ? 'border border-[#c2c2c2] border-b-[3px] border-b-[#4398ff] bg-[#ffe4c4] pb-0.5 font-bold text-[#111]'
              : 'border border-[#c2c2c2] pb-0.5 font-normal whitespace-nowrap'}
          >
            {name}
          </th>
        ))}
      </tr>
    </thead>
    <tbody>
      {ROWS.map((row, i) => <BillRow key={i} row={row} />)}
    </tbody>
  </table>
);

/* ---------- scroll bars ---------- */

const ScrollY = ({ before, thumb, after }) => (
  <div className="flex flex-col items-center w-5 shrink-0 bg-[#e7e7e7]">
    <svg width="12" height="22" viewBox="0 0 12 22"><path d="M6 8l6 7H0z" fill="#6f6f78" /></svg>
    <div className={before} />
    <div className={`w-[15px] rounded-full bg-[#bdbdbd] ${thumb}`} />
    <div className={after} />
    <svg width="12" height="20" viewBox="0 0 12 20"><path d="M6 14l6-6H0z" fill="#6f6f78" /></svg>
  </div>
);

const ScrollX = () => (
  <div className="flex items-center h-[22px] shrink-0 bg-[#e6e6e6] border-t border-[#ededed]">
    <svg width="21" height="14" viewBox="0 0 21 14"><path d="M7 7l6-6v12z" fill="#6f6f78" /></svg>
    <div className="grow-[1302] h-[15px] rounded-full bg-[#8c8c8c]" />
    <div className="grow-[522]" />
    <div className="flex items-center w-[41px] h-full bg-[#d9d9d9]">
      <svg width="20" height="14" viewBox="0 0 20 14"><path d="M14 7L8 1v12z" fill="#6f6f78" /></svg>
    </div>
  </div>
);

/* ---------- detail panel ---------- */

const DETAIL_TABS = ['工料机显示', '单价构成', '标准换算', '换算信息', '安装费用', '特征及内容', '组价方案', '工程量明细', '反查图形工程量', '说明信息'];
const FACTORS = ['人工', '材料', '机械', '设备', '主材', '单价'];

const Annotation = () => (
  <svg className="absolute -left-4 top-0 pointer-events-none" width="350" height="160" viewBox="0 0 350 160" fill="none" stroke="#ff1f10" strokeWidth="5" strokeLinecap="round" strokeLinejoin="round">
    <path d="M98 62L84 58 71 53H39L27 60 15 74 12 86 12 99 18 113 31 128 49 137 66 140 92 143H229L235 146H306L322 138 328 124 331 115V104L312 88 297 79 282 72 266 62 253 57 245 56H137L122 59 107 59" />
  </svg>
);

const DetailPanel = () => {
  const [tab, setTab] = useState('标准换算');

  return (
    <section className="relative flex flex-col h-[281px] shrink-0 bg-[#f4f4f4] border-t-2 border-[#bdbdbd]">
      <div className="flex h-[43px] pt-[7px] pl-3 gap-1 text-lg text-[#333]">
        {DETAIL_TABS.map(name => (
          <button
            key={name}
            onClick={() => setTab(name)}
            className={`px-[21px] rounded-t-[3px] ${name === tab ? 'bg-[#4398ff] text-white font-medium' : 'bg-[#bebebe]'}`}
          >
            {name}
          </button>
        ))}
      </div>
      <div className="flex flex-1 min-h-0 border-b-2 border-[#cfcfcf] text-lg leading-5 text-[#222]">
        <div className="flex-1 bg-white border-t-2 border-l border-[#c2c2c2] mb-px">
          <table className="table-fixed border-collapse w-[760px]">
            <colgroup>
              <col className="w-[34px]" />
              <col />
              <col className="w-[163px]" />
            </colgroup>
            <thead>
              <tr className="h-[34px]">
                <th className="bg-[#e7e7e7] border-r-2 border-[#c2c2c2]" />
                <th className="bg-[#e7e7e7] border-r border-[#c2c2c2] font-normal">换算列表</th>
                <th className="bg-[#ffe4c4] border-b-[3px] border-b-[#4398ff] font-bold">换算内容</th>
              </tr>
            </thead>
            <tbody>
              <tr className="h-[34px]">
                <th scope="row" className="bg-[#ffe4c4] border-y border-y-[#c2c2c2] border-r-[3px] border-r-[#4398ff] font-['Liberation_Mono',monospace] text-[15px]">1</th>
                <td className="relative px-0.5 bg-[#e0dad8] border-y border-[#c2c2c2]">
                  <Mixed>单个过滤器安装 人工*1.2</Mixed>
                  <svg className="absolute right-0 top-0" width="10" height="8" viewBox="0 0 10 8"><path d="M0 0h10v8z" fill="#f00" /></svg>
                </td>
                <td className="border-2 border-t-[3px] border-[#858585] border-t-[#4398ff]"><Check label="换算内容" /></td>
              </tr>
            </tbody>
          </table>
        </div>
        <div className="flex w-[576px] bg-white border-t border-l-[3px] border-[#c2c2c2]">
          <div className="flex-1 overflow-hidden">
            <table className="table-fixed border-collapse w-[318px]">
              <colgroup>
                <col className="w-[42px]" />
                <col className="w-[158px]" />
                <col />
              </colgroup>
              <thead>
                <tr className="h-[34px] bg-[#e7e7e7]">
                  <th className="border border-[#c2c2c2]" />
                  <th className="border border-[#c2c2c2] font-normal">工料机类别</th>
                  <th className="border border-[#c2c2c2] font-normal">系数</th>
                </tr>
              </thead>
              <tbody>
                {FACTORS.map((name, i) => (
                  <tr key={name} className="h-[34px]">
                    <th scope="row" className="border border-[#c2c2c2] pb-[3px] font-normal"><Mixed>{i + 1}</Mixed></th>
                    <td className="border border-[#c2c2c2] px-[3px] pb-[3px]">{name}</td>
                    <td className="border border-[#c2c2c2] px-1 pb-[3px] text-right"><Mixed>1</Mixed></td>
                  </tr>
                ))}
              </tbody>
            </table>
          </div>
          <ScrollY before="h-0" thumb="grow-[158]" after="grow-[32]" />
        </div>
      </div>
      <Annotation />
    </section>
  );
};

const App = () => (
  <div className="flex flex-col h-screen bg-white text-[#222] font-['Noto_Sans_CJK_SC',sans-serif]">
    <ViewerBar />
    <main className="flex flex-col flex-1 min-h-0 mt-[14px] mb-[5px] ml-4 mr-[18px]">
      <div className="bg-gradient-to-b from-white to-[#f3f3f3]">
        <TitleBar />
        <MenuRow />
      </div>
      <Ribbon />
      <ProjectTabs />
      <div className="flex flex-1 min-h-0">
        <div className="flex-1 min-w-0 overflow-hidden"><BillTable /></div>
        <ScrollY before="grow-[168]" thumb="grow-[193]" after="h-0" />
      </div>
      <ScrollX />
      <DetailPanel />
    </main>
  </div>
);

export default App;
